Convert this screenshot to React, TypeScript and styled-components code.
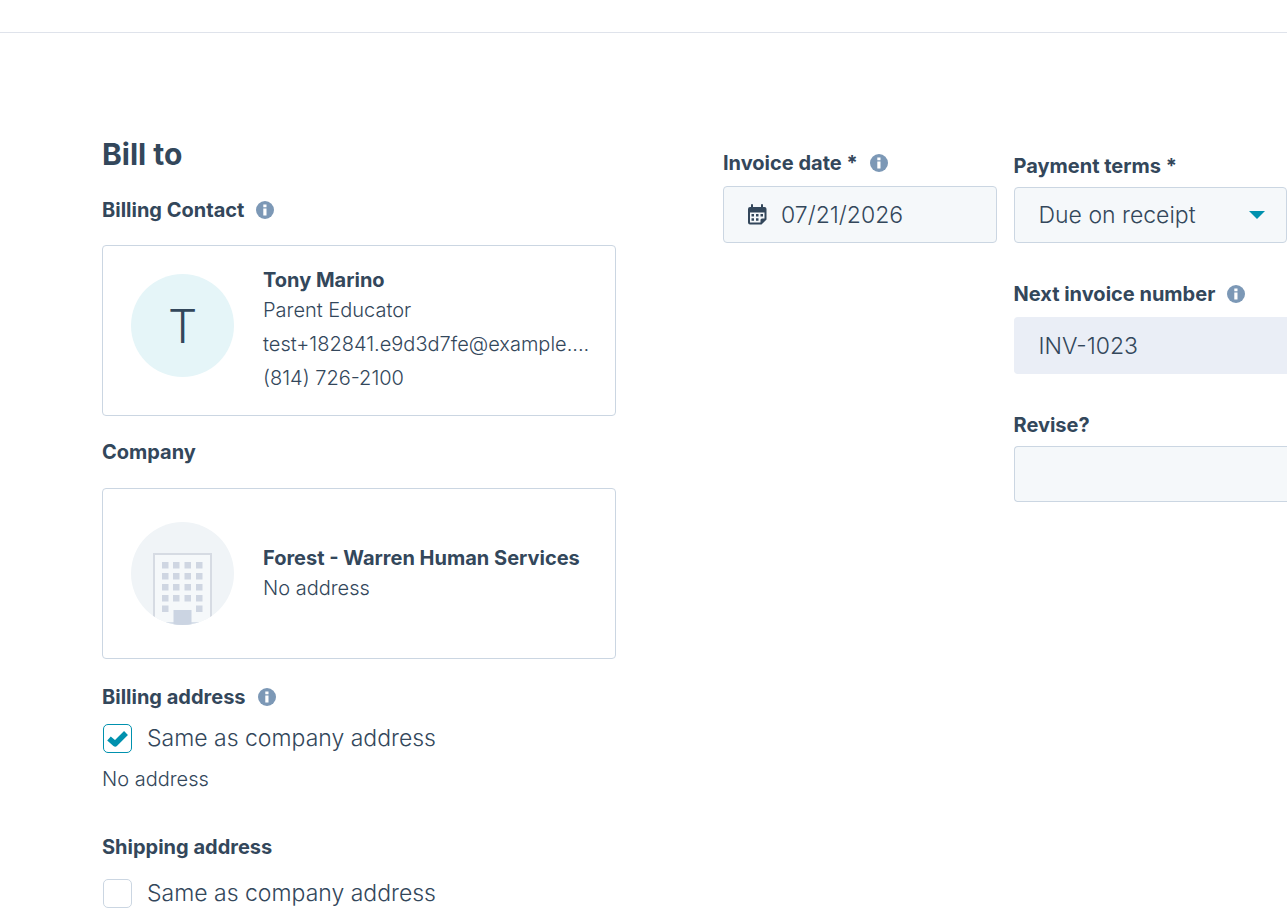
import React, { useState } from 'react';
import styled, { createGlobalStyle } from 'styled-components';

const ink = '#33475b';
const line = '#cbd6e2';
const teal = '#0091ae';

const GlobalStyle = createGlobalStyle`
  *, *::before, *::after { box-sizing: border-box; }
  body {
    margin: 0;
    background: #fff;
    color: ${ink};
    font-family: Inter, "Liberation Sans", sans-serif;
    font-size: 20px;
    font-weight: 300;
  }
`;

const TopBar = styled.header`
  height: 33px;
  border-bottom: 1px solid #dfe3eb;
`;

const Page = styled.main`
  display: grid;
  grid-template-columns: minmax(0, 514fr) minmax(0, 564fr);
  column-gap: 107px;
  padding: 104px 0 16px 102px;
`;

const BillTo = styled.section`
  display: flex;
  flex-direction: column;
`;

const Title = styled.h1`
  margin: 0 0 25px;
  font-size: 30px;
  line-height: 34px;
  font-weight: 700;
`;

const Heading = styled.h2<{ $top?: number; $gap: number }>`
  display: flex;
  align-items: center;
  gap: 12px;
  margin: ${(p) => p.$top ?? 0}px 0 ${(p) => p.$gap}px;
  font-size: 20px;
  line-height: 28px;
  font-weight: 700;
`;

const Card = styled.article`
  display: flex;
  align-items: center;
  gap: 29px;
  height: 171px;
  margin-bottom: 22px;
  padding: 0 24px 0 28px;
  border: 1px solid ${line};
  border-radius: 4px;
`;

const Avatar = styled.div`
  flex: none;
  display: flex;
  align-items: center;
  justify-content: center;
  width: 103px;
  height: 103px;
  margin-bottom: 10px;
  border-radius: 50%;
  background: #e5f5f8;
  font-size: 46px;
  font-weight: 300;
`;

const CardText = styled.div`
  min-width: 0;
  display: flex;
  flex-direction: column;
  gap: 2px;
  padding-bottom: 2px;
`;

const Lines = styled.div<{ $height: number }>`
  display: flex;
  flex-direction: column;
  line-height: ${(p) => p.$height}px;
`;

const Name = styled.strong`
  font-weight: 700;
  white-space: nowrap;
`;

const Detail = styled.span`
  white-space: nowrap;
`;

const CheckLabel = styled.label`
  display: flex;
  align-items: center;
  gap: 15px;
  font-size: 23px;
  line-height: 30px;
  padding-left: 1px;
`;

const CheckBox = styled.span`
  display: grid;
  width: 29px;
  height: 29px;

  > * { grid-area: 1 / 1; }
  > svg { pointer-events: none; }
`;

const CheckInput = styled.input`
  appearance: none;
  width: 29px;
  height: 29px;
  margin: 0;
  border: 1px solid ${line};
  border-radius: 5px;
  background: #fff;

  &:checked { border-color: ${teal}; }
`;

const NoAddress = styled.p`
  margin: 11px 0 39px;
  line-height: 30px;
`;

const Terms = styled.section`
  display: grid;
  grid-template-columns: minmax(0, 1fr) minmax(0, 1fr);
  column-gap: 17px;
  align-items: start;
  padding-top: 12px;
`;

const Column = styled.div`
  display: flex;
  flex-direction: column;
  gap: 37px;
  padding-top: 3px;
`;

const Field = styled.div<{ $tight?: boolean }>`
  display: flex;
  flex-direction: column;
  gap: ${(p) => (p.$tight ? 7 : 9)}px;
`;

const LabelRow = styled.div`
  display: flex;
  align-items: center;
  gap: 12px;
  line-height: 28px;
  font-weight: 700;
`;

const Control = styled.div<{ $readOnly?: boolean; $open?: boolean; $short?: boolean }>`
  display: flex;
  align-items: center;
  gap: 14px;
  height: ${(p) => (p.$short ? 56 : 57)}px;
  padding: 0 21px 0 24px;
  border: 1px solid ${(p) => (p.$readOnly ? '#eaeef6' : line)};
  border-radius: ${(p) => (p.$open ? '4px 0 0 4px' : '4px')};
  ${(p) => p.$open && 'border-right: 0;'}
  background: ${(p) => (p.$readOnly ? '#eaeef6' : '#f5f8fa')};
`;

const TextInput = styled.input`
  flex: 1;
  min-width: 0;
  padding: 0;
  border: 0;
  outline: 0;
  background: transparent;
  color: inherit;
  font: inherit;
  font-size: 23px;
`;

const Select = styled.select`
  flex: 1;
  min-width: 0;
  appearance: none;
  padding: 0;
  border: 0;
  outline: 0;
  background: transparent;
  color: inherit;
  font: inherit;
  font-size: 23px;
`;

const InfoIcon = () => (
  <svg width="18" height="18" viewBox="0 0 18 18" aria-hidden="true">
    <circle cx="9" cy="9" r="9" fill="#7c98b6" />
    <path d="M7.3 3.5h3.2v2.7H7.3zM7.3 7.5h3.2v7H7.3z" fill="#fff" />
  </svg>
);

const CalendarIcon = () => (
  <svg width="19" height="21" viewBox="1 0 19 21" aria-hidden="true">
    <path
      d="M5 0a1 1 0 0 1 1 1v2h8V1a1 1 0 0 1 2 0v2h1.500a2 2 0 0 1 2 2v10.500L14.500 20.500H3a2 2 0 0 1-2-2V5a2 2 0 0 1 2-2h1V1a1 1 0 0 1 1-1z"
      fill={ink}
    />
    <path d="M3 8.500h14.500v6H15a1.500 1.500 0 0 0-1.500 1.500v2.500H3z" fill="#f5f8fa" />
    <path
      d="M4.500 10H7v2.500H4.500zM9 10h2.500v2.500H9zM13.500 10H16v2.500h-2.500zM4.500 14.300H7v2.500H4.500zM9 14.300h2.500v2.500H9z"
      fill={ink}
    />
  </svg>
);

const CheckIcon = () => (
  <svg width="29" height="29" viewBox="0 0 29 29" aria-hidden="true">
    <path
      d="M6 14.500l6.200 5.300L23 9"
      fill="none"
      stroke={teal}
      strokeWidth="5.500"
      strokeLinejoin="round"
    />
  </svg>
);

const Caret = () => (
  <svg width="16" height="8" viewBox="0 0 16 8" aria-hidden="true">
    <path d="M0 0h16L8 8z" fill={teal} />
  </svg>
);

const columns = [31, 42, 53.5, 65];
const rows = [40, 51, 62, 73, 83.5];

const BuildingIcon = () => (
  <svg width="103" height="103" viewBox="0 0 103 103" aria-hidden="true">
    <defs>
      <clipPath id="round">
        <circle cx="51.500" cy="51.500" r="51.500" />
      </clipPath>
    </defs>
    <g clipPath="url(#round)">
      <rect width="103" height="103" fill="#f0f4f7" />
      <rect x="23" y="32" width="57" height="80" fill="#f5f8fa" stroke="#d6dbe3" strokeWidth="2" />
      <rect x="23" y="100" width="57" height="4" fill="#d8e0ea" />
      {rows.map((y, r) =>
        columns.map((x, c) =>
          r === 4 && (c === 1 || c === 2) ? null : (
            <rect key={`${r}-${c}`} x={x} y={y} width="6.500" height="6.500" fill="#cfd6e2" />
          ),
        ),
      )}
      <rect x="42.500" y="88" width="18" height="15" fill="#cbd4e2" />
    </g>
  </svg>
);

function SameAddress({ initial = false }: { initial?: boolean }) {
  const [checked, setChecked] = useState(initial);
  return (
    <CheckLabel>
      <CheckBox>
        <CheckInput type="checkbox" checked={checked} onChange={(e) => setChecked(e.target.checked)} />
        {checked && <CheckIcon />}
      </CheckBox>
      Same as company address
    </CheckLabel>
  );
}

export default function App() {
  return (
    <>
      <GlobalStyle />
      <TopBar />
      <Page>
        <BillTo>
          <Title>Bill to</Title>
          <Heading $gap={21}>Billing Contact <InfoIcon /></Heading>
          <Card>
            <Avatar>T</Avatar>
            <CardText>
              <Lines $height={30}>
                <Name>Tony Marino</Name>
                <Detail>Parent Educator</Detail>
              </Lines>
              <Lines $height={34}>
                <Detail>test+182841.e9d3d7fe@example....</Detail>
                <Detail>(814) 726-2100</Detail>
              </Lines>
            </CardText>
          </Card>
          <Heading $gap={22}>Company</Heading>
          <Card>
            <BuildingIcon />
            <CardText>
              <Lines $height={30}>
                <Name>Forest - Warren Human Services</Name>
                <Detail>No address</Detail>
              </Lines>
            </CardText>
          </Card>
          <Heading $top={2} $gap={12}>Billing address <InfoIcon /></Heading>
          <SameAddress initial />
          <NoAddress>No address</NoAddress>
          <Heading $gap={17}>Shipping address</Heading>
          <SameAddress />
        </BillTo>
        <Terms>
          <Field>
            <LabelRow><label htmlFor="date">Invoice date *</label> <InfoIcon /></LabelRow>
            <Control>
              <CalendarIcon />
              <TextInput id="date" defaultValue="07/21/2026" />
            </Control>
          </Field>
          <Column>
            <Field $tight>
              <LabelRow><label htmlFor="terms">Payment terms *</label></LabelRow>
              <Control $short>
                <Select id="terms"><option>Due on receipt</option></Select>
                <Caret />
              </Control>
            </Field>
            <Field>
              <LabelRow><label htmlFor="number">Next invoice number</label> <InfoIcon /></LabelRow>
              <Control $readOnly $open>
                <TextInput id="number" defaultValue="INV-1023" readOnly />
              </Control>
            </Field>
            <Field $tight>
              <LabelRow><label htmlFor="revise">Revise?</label></LabelRow>
              <Control $open $short><TextInput id="revise" /></Control>
            </Field>
          </Column>
        </Terms>
      </Page>
    </>
  );
}
